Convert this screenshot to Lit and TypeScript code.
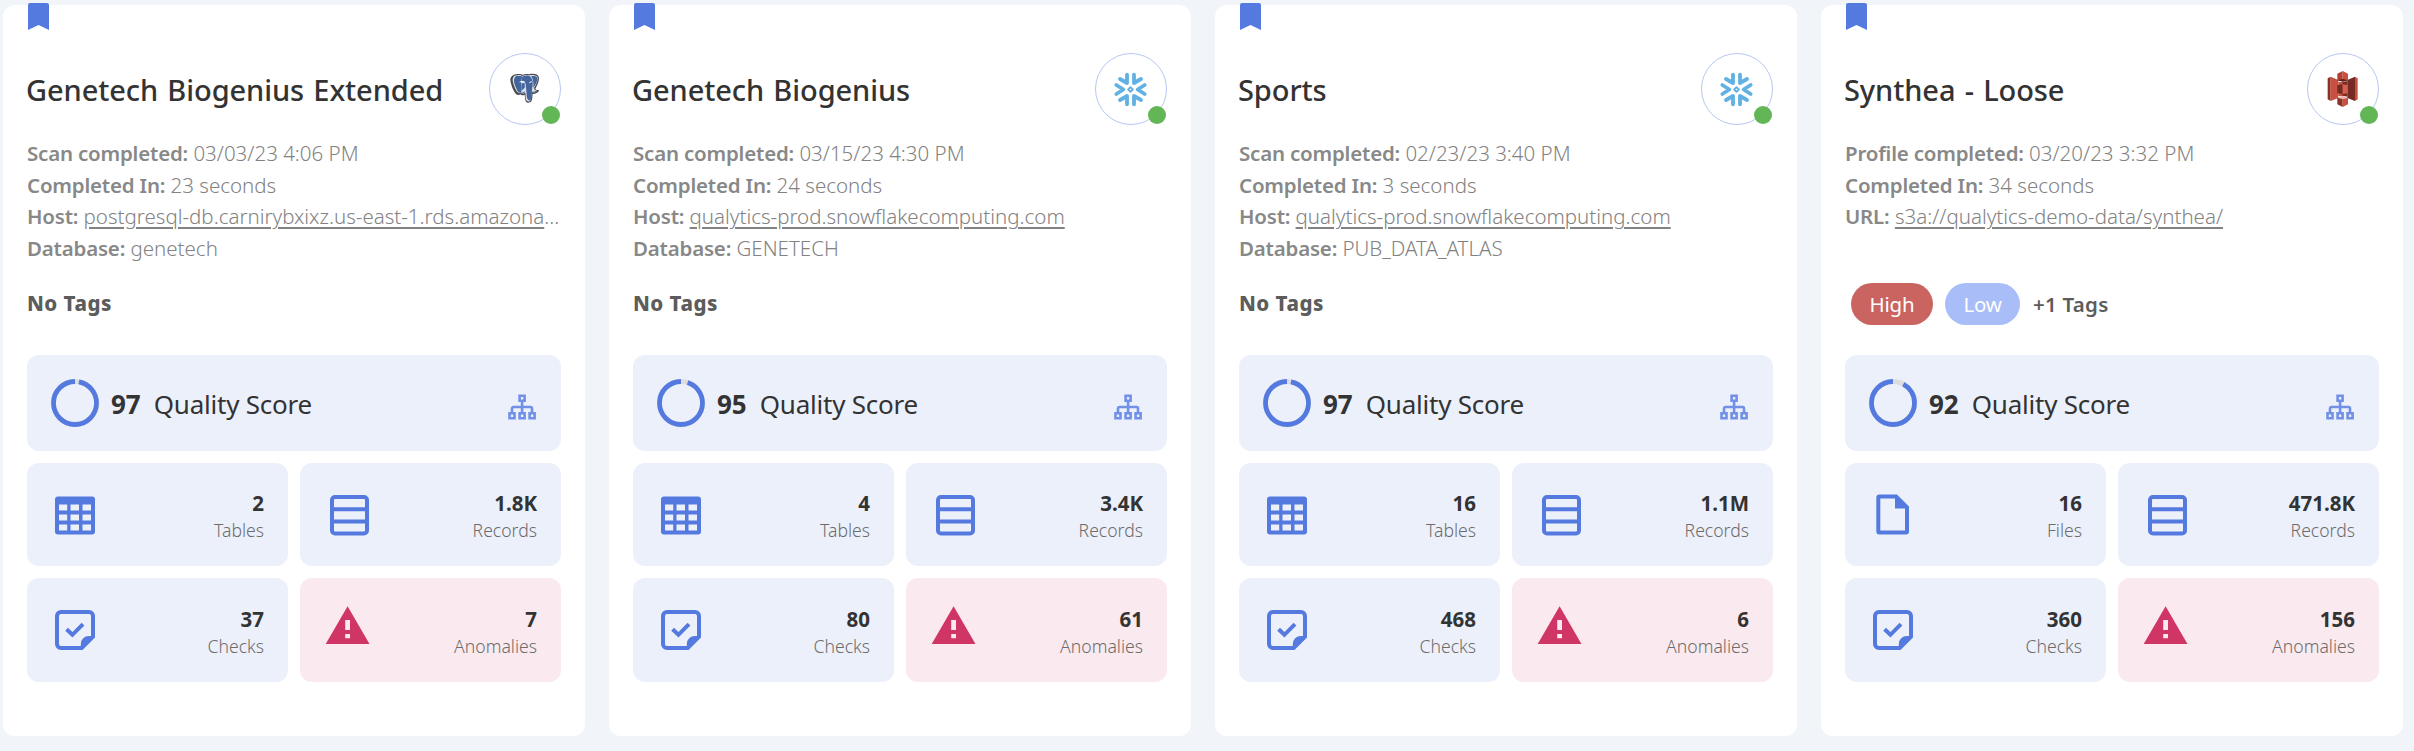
import { LitElement, html, css, svg, nothing } from "lit";
import { customElement, property } from "lit/decorators.js";

type Kind = "tables" | "files" | "records" | "checks" | "anomalies";
type Logo = "postgres" | "snowflake" | "s3";

interface Tag { label: string; tone: "high" | "low"; }
interface Fact { label: string; value: string; link?: boolean; }
interface Source {
  name: string;
  logo: Logo;
  facts: Fact[];
  tags: Tag[];
  moreTags?: string;
  score: number;
  stats: { kind: Kind; value: string; label: string }[];
}

const stats = (kind: Kind, a: string, records: string, checks: string, anomalies: string) => [
  { kind, value: a, label: kind === "files" ? "Files" : "Tables" },
  { kind: "records" as Kind, value: records, label: "Records" },
  { kind: "checks" as Kind, value: checks, label: "Checks" },
  { kind: "anomalies" as Kind, value: anomalies, label: "Anomalies" },
];

const SOURCES: Source[] = [
  {
    name: "Genetech Biogenius Extended",
    logo: "postgres",
    facts: [
      { label: "Scan completed:", value: "03/03/23 4:06 PM" },
      { label: "Completed In:", value: "23 seconds" },
      { label: "Host:", value: "postgresql-db.carnirybxixz.us-east-1.rds.amazonaws.com", link: true },
      { label: "Database:", value: "genetech" },
    ],
    tags: [],
    score: 97,
    stats: stats("tables", "2", "1.8K", "37", "7"),
  },
  {
    name: "Genetech Biogenius",
    logo: "snowflake",
    facts: [
      { label: "Scan completed:", value: "03/15/23 4:30 PM" },
      { label: "Completed In:", value: "24 seconds" },
      { label: "Host:", value: "qualytics-prod.snowflakecomputing.com", link: true },
      { label: "Database:", value: "GENETECH" },
    ],
    tags: [],
    score: 95,
    stats: stats("tables", "4", "3.4K", "80", "61"),
  },
  {
    name: "Sports",
    logo: "snowflake",
    facts: [
      { label: "Scan completed:", value: "02/23/23 3:40 PM" },
      { label: "Completed In:", value: "3 seconds" },
      { label: "Host:", value: "qualytics-prod.snowflakecomputing.com", link: true },
      { label: "Database:", value: "PUB_DATA_ATLAS" },
    ],
    tags: [],
    score: 97,
    stats: stats("tables", "16", "1.1M", "468", "6"),
  },
  {
    name: "Synthea - Loose",
    logo: "s3",
    facts: [
      { label: "Profile completed:", value: "03/20/23 3:32 PM" },
      { label: "Completed In:", value: "34 seconds" },
      { label: "URL:", value: "s3a://qualytics-demo-data/synthea/", link: true },
    ],
    tags: [{ label: "High", tone: "high" }, { label: "Low", tone: "low" }],
    moreTags: "+1 Tags",
    score: 92,
    stats: stats("files", "16", "471.8K", "360", "156"),
  },
];

const ICONS = {
  tables: svg`<path fill="currentColor" fill-rule="evenodd" d="M7 5.500H41a3 3 0 0 1 3 3V40.500a3 3 0 0 1-3 3H7a3 3 0 0 1-3-3V8.500a3 3 0 0 1 3-3ZM8 13.500v6h8.200v-6ZM19.500 13.500v6h8.500v-6ZM31.500 13.500v6H40v-6ZM8 23.500v6h8.200v-6ZM19.500 23.500v6h8.500v-6ZM31.500 23.500v6H40v-6ZM8 33.500v6h8.200v-6ZM19.500 33.500v6h8.500v-6ZM31.500 33.500v6H40v-6Z"/>`,
  files: svg`<path fill="currentColor" fill-rule="evenodd" d="M10.300 3.500H28L40 15.500V40.500a3 3 0 0 1-3 3H10.300a3 3 0 0 1-3-3V6.500a3 3 0 0 1 3-3ZM11.300 7.500V39.500H36V17.500H26V7.500Z"/>`,
  records: svg`<rect x="8" y="6" width="35" height="36.500" rx="3" fill="none" stroke="currentColor" stroke-width="4"/><path d="M8 18.300H43M8 30.500H43" stroke="currentColor" stroke-width="4"/>`,
  checks: svg`<path fill="currentColor" fill-rule="evenodd" d="M10 4H38a6 6 0 0 1 6 6V31.500L31.500 44H10a6 6 0 0 1-6-6V10a6 6 0 0 1 6-6ZM10 8a2 2 0 0 0-2 2V38a2 2 0 0 0 2 2H29.800V38a8 8 0 0 1 8-8H40V10a2 2 0 0 0-2-2Z"/><path d="M15.600 23.300l5.800 5.500L32 18.200" fill="none" stroke="currentColor" stroke-width="4"/>`,
  anomalies: svg`<path fill="currentColor" fill-rule="evenodd" d="M23.600.3L45.500 38H1.700ZM21.200 14v10h4.800v-10ZM21.200 28v4.200h4.800v-4.200Z"/>`,
};

const LOGOS = {
  postgres: svg`<svg viewBox="27 39 216 216">
    <path d="M112 102c8-1 12 1 16 2c6-2 12-3 19-1c12-3 24-1 28 5c5 9-1 25-9 38c1 3 4 4 10 4c2 3-1 7-8 10c-4 2-7 2-10 2c-1 10-1 17-4 22c-5 6-14 6-17-1c-2-6-2-13-3-19c-6 3-11 2-13-1c-6 3-11 2-15-3c-8-11-15-31-15-42c1-10 11-15 21-16z" fill="#4a4a4e"/>
    <path d="M112 105c7-1 11 1 16 3c5-3 12-4 19-2c10-2 20-1 25 4c4 7-2 22-10 34c1 4 2 7 9 8c-4 5-10 6-16 5c-1 11-1 20-4 25c-4 4-10 3-12-1c-3-7-2-16-3-23c-5 3-11 4-13 0c-5 2-9 1-12-3c-7-10-14-29-13-38c1-8 7-11 14-12z" fill="#d9dee8"/>
    <path d="M112 107c6 0 12 1 17 3c-5 6-8 12-5 22c1 8 2 17 0 24c-4 3-8 2-10-1c-6-10-13-26-12-35c1-8 5-13 10-13z" fill="#44659c"/>
    <path d="M126 113c4-6 14-8 22-5c8 5 11 14 10 26c0 6-2 9-2 15c-1 10-1 20-4 30c-2 4-7 3-9-1c-4-8-3-18-4-26c0-6-2-12-2-20c-2-6-6-10-13-9z" fill="#44659c"/>
    <path d="M153 108c8-1 17 0 19 5c2 6-4 20-12 30c1-13 0-27-7-35z" fill="#44659c"/>
    <path d="M125 130l9-1v14l-8 8z" fill="#44659c"/>
    <path d="M119 126c5-2 10-3 15 0M148 128l7-3" fill="none" stroke="#fff" stroke-width="3"/>
    <path d="M121 159c5 1 10 0 14-4M154 155c5 3 10 2 14-1" fill="none" stroke="#44659c" stroke-width="3"/>
  </svg>`,
  snowflake: svg`<svg viewBox="45 39 216 216" fill="none" stroke="#62b1e3" stroke-width="11.500" stroke-linecap="round" stroke-linejoin="round">
    <path d="M109 135l21 13.500l-21 13.500M194 135l-21 13.500l21 13.500M141 104v25l-21-12M162 104v25l21-12M141 193v-25l-21 12M162 193v-25l21 12"/>
    <path d="M151.500 141.500l7 7l-7 7l-7-7z" stroke-width="5.500"/>
  </svg>`,
  s3: svg`<svg viewBox="51 39 216 216">
    <path d="M113 115l9-5v73l-9-5z" fill="#8c3123"/>
    <path d="M122 110l23 10v54l-23 9z" fill="#c94f40"/>
    <path d="M172 120l23-10v73l-23-9z" fill="#752b23"/>
    <path d="M195 110l8 5v63l-8 5z" fill="#c94f40"/>
    <path d="M145 126h27v42h-27z" fill="#c94f40"/>
    <path d="M158 126l14-3v47l-14-3z" fill="#752b23"/>
    <path d="M142 101l16-8v31l-16-3z" fill="#b0402f"/>
    <path d="M158 93l16 8v20l-16 3z" fill="#c94f40"/>
    <path d="M142 121l16-4l16 4l-16 4z" fill="#5e1f18"/>
    <path d="M142 135l16-2v29l-16-2z" fill="#752b23"/>
    <path d="M158 133l15 2v25l-15 2z" fill="#d5604f"/>
    <path d="M142 172l16-4l16 4l-16 5z" fill="#eab4aa"/>
    <path d="M142 173l16 4v24l-16-8z" fill="#8c3123"/>
    <path d="M158 177l16-4v20l-16 8z" fill="#c94f40"/>
  </svg>`,
};

@customElement("score-ring")
class ScoreRing extends LitElement {
  @property({ type: Number }) score = 0;
  static styles = css`
    :host { display: block; width: 48px; height: 48px; }
    svg { display: block; width: 48px; height: 48px; transform: scaleX(-1) rotate(-90deg); }
    .track { stroke: #dddddd; }
    .value { stroke: #557adf; }
  `;
  render() {
    return html`<svg viewBox="0 0 48 48" fill="none" stroke-width="4.800">
      <circle class="track" cx="24" cy="24" r="21.500"></circle>
      <circle class="value" cx="24" cy="24" r="21.500" pathLength="100" stroke-dasharray="${this.score} 100"></circle>
    </svg>`;
  }
}

@customElement("source-card")
class SourceCard extends LitElement {
  @property({ attribute: false }) source!: Source;
  static styles = css`
    :host {
      display: block; position: relative; box-sizing: border-box; min-width: 0;
      height: 731px; padding: 48px 24px 0; border-radius: 12px; background: #fff; color: #333;
    }
    .bookmark { position: absolute; left: 25px; top: -2px; width: 21px; height: 27px; color: #557adf; }
    .head { display: flex; align-items: center; justify-content: space-between; height: 72px; }
    .name { margin: 0 0 0 -1px; padding-top: 2px; font-size: 29px; font-weight: 500; line-height: 40px; white-space: nowrap; word-spacing: 1.800px; letter-spacing: -0.080px; }
    .logo { position: relative; box-sizing: border-box; flex: none; width: 72px; height: 72px; border: 1px solid #b7c7f3; border-radius: 50%; }
    .logo svg { display: block; width: 72px; height: 72px; margin: -1px; }
    .status { position: absolute; right: 0; bottom: 0; width: 18px; height: 18px; border-radius: 50%; background: #62b655; }
    .facts { height: 127px; margin-top: 13px; font-size: 20.500px; line-height: 31.700px; color: #828282; font-weight: 300; }
    .fact { overflow: hidden; white-space: nowrap; text-overflow: ellipsis; }
    .fact b { font-weight: 650; color: #888; letter-spacing: -0.200px; }
    .link { text-decoration: underline; text-decoration-thickness: 1.500px; text-underline-offset: 2.500px; }
    .tags { display: flex; align-items: center; gap: 12px; height: 42px; margin-top: 18px; font-size: 20.500px; color: #5c5c5c; }
    .none { font-weight: 800; padding-bottom: 2px; letter-spacing: 0.500px; }
    .pill { height: 42px; padding: 0 19px 0 18.500px; border-radius: 21px; line-height: 42px; color: #fff; letter-spacing: -0.200px; }
    .pill:first-child { margin-left: 6px; }
    .high { background: #ca6460; width: 44.500px; }
    .low { background: #a9bdf9; width: 37.500px; }
    .more { font-weight: 650; padding-left: 1px; letter-spacing: 0.250px; }
    .grid { display: grid; grid-template-columns: 1fr 1fr; grid-template-rows: 96px 103px 104px; gap: 12px; margin-top: 30px; }
    .tile { display: flex; align-items: center; justify-content: space-between; padding: 0 24px; border-radius: 12px; background: #ecf0fb; }
    .quality { grid-column: 1 / -1; justify-content: flex-start; font-size: 26px; }
    .num { margin-left: 12px; font-weight: 700; padding-top: 1px; }
    .caption { flex: 1; margin-left: 13px; font-weight: 400; letter-spacing: -0.220px; padding-top: 1px; }
    .tree { width: 28px; height: 26px; margin: 7px 1px 0 0; color: #7291e6; }
    .icon { width: 48px; height: 48px; color: #557adf; }
    .text { padding-top: 3px; text-align: right; }
    .value { font-size: 20.500px; font-weight: 700; line-height: 28px; }
    .label { font-size: 17.600px; font-weight: 300; line-height: 26px; color: #6c6c6c; }
    .anomalies { background: #fae9ef; }
    .anomalies .icon { color: #cf3565; }
  `;
  render() {
    const s = this.source;
    return html`
      <svg class="bookmark" viewBox="0 0 21 27"><path fill="currentColor" d="M2 0H19a2 2 0 0 1 2 2V27L10.500 22L0 27V2a2 2 0 0 1 2-2Z"/></svg>
      <div class="head">
        <h2 class="name">${s.name}</h2>
        <div class="logo">${LOGOS[s.logo]}<span class="status"></span></div>
      </div>
      <div class="facts">
        ${s.facts.map((f) => html`<div class="fact"><b>${f.label}</b> <span class=${f.link ? "link" : "plain"}>${f.value}</span></div>`)}
      </div>
      <div class="tags">
        ${s.tags.length ? s.tags.map((t) => html`<span class="pill ${t.tone}">${t.label}</span>`) : html`<span class="none">No Tags</span>`}
        ${s.moreTags ? html`<span class="more">${s.moreTags}</span>` : nothing}
      </div>
      <div class="grid">
        <div class="tile quality">
          <score-ring .score=${s.score}></score-ring>
          <span class="num">${s.score}</span>
          <span class="caption">Quality Score</span>
          <svg class="tree" viewBox="0 0 28 26" fill="none" stroke="currentColor" stroke-width="2.600">
            <path d="M11.600 1.700h5v5h-5zM1.500 19.200h5v5h-5zM11.600 19.200h5v5h-5zM21.600 19.200h5v5h-5zM14.100 7v12M4 19v-4.500a1.500 1.500 0 0 1 1.500-1.500h17a1.500 1.500 0 0 1 1.500 1.500V19"/>
          </svg>
        </div>
        ${s.stats.map((t) => html`
          <div class="tile ${t.kind}">
            <svg class="icon" viewBox="0 0 48 48">${ICONS[t.kind]}</svg>
            <div class="text">
              <div class="value">${t.value}</div>
              <div class="label">${t.label}</div>
            </div>
          </div>`)}
      </div>
    `;
  }
}

@customElement("app-root")
class AppRoot extends LitElement {
  static styles = css`
    :host {
      display: block; box-sizing: border-box; height: 751px; padding: 5px 11px 0 3px; overflow: hidden;
      background: #f1f5fa; font-family: "Noto Sans", "Open Sans", sans-serif;
    }
    .cards { display: grid; grid-template-columns: repeat(4, 1fr); gap: 24px; }
  `;
  render() {
    return html`<div class="cards">${SOURCES.map((s) => html`<source-card .source=${s}></source-card>`)}</div>`;
  }
}
